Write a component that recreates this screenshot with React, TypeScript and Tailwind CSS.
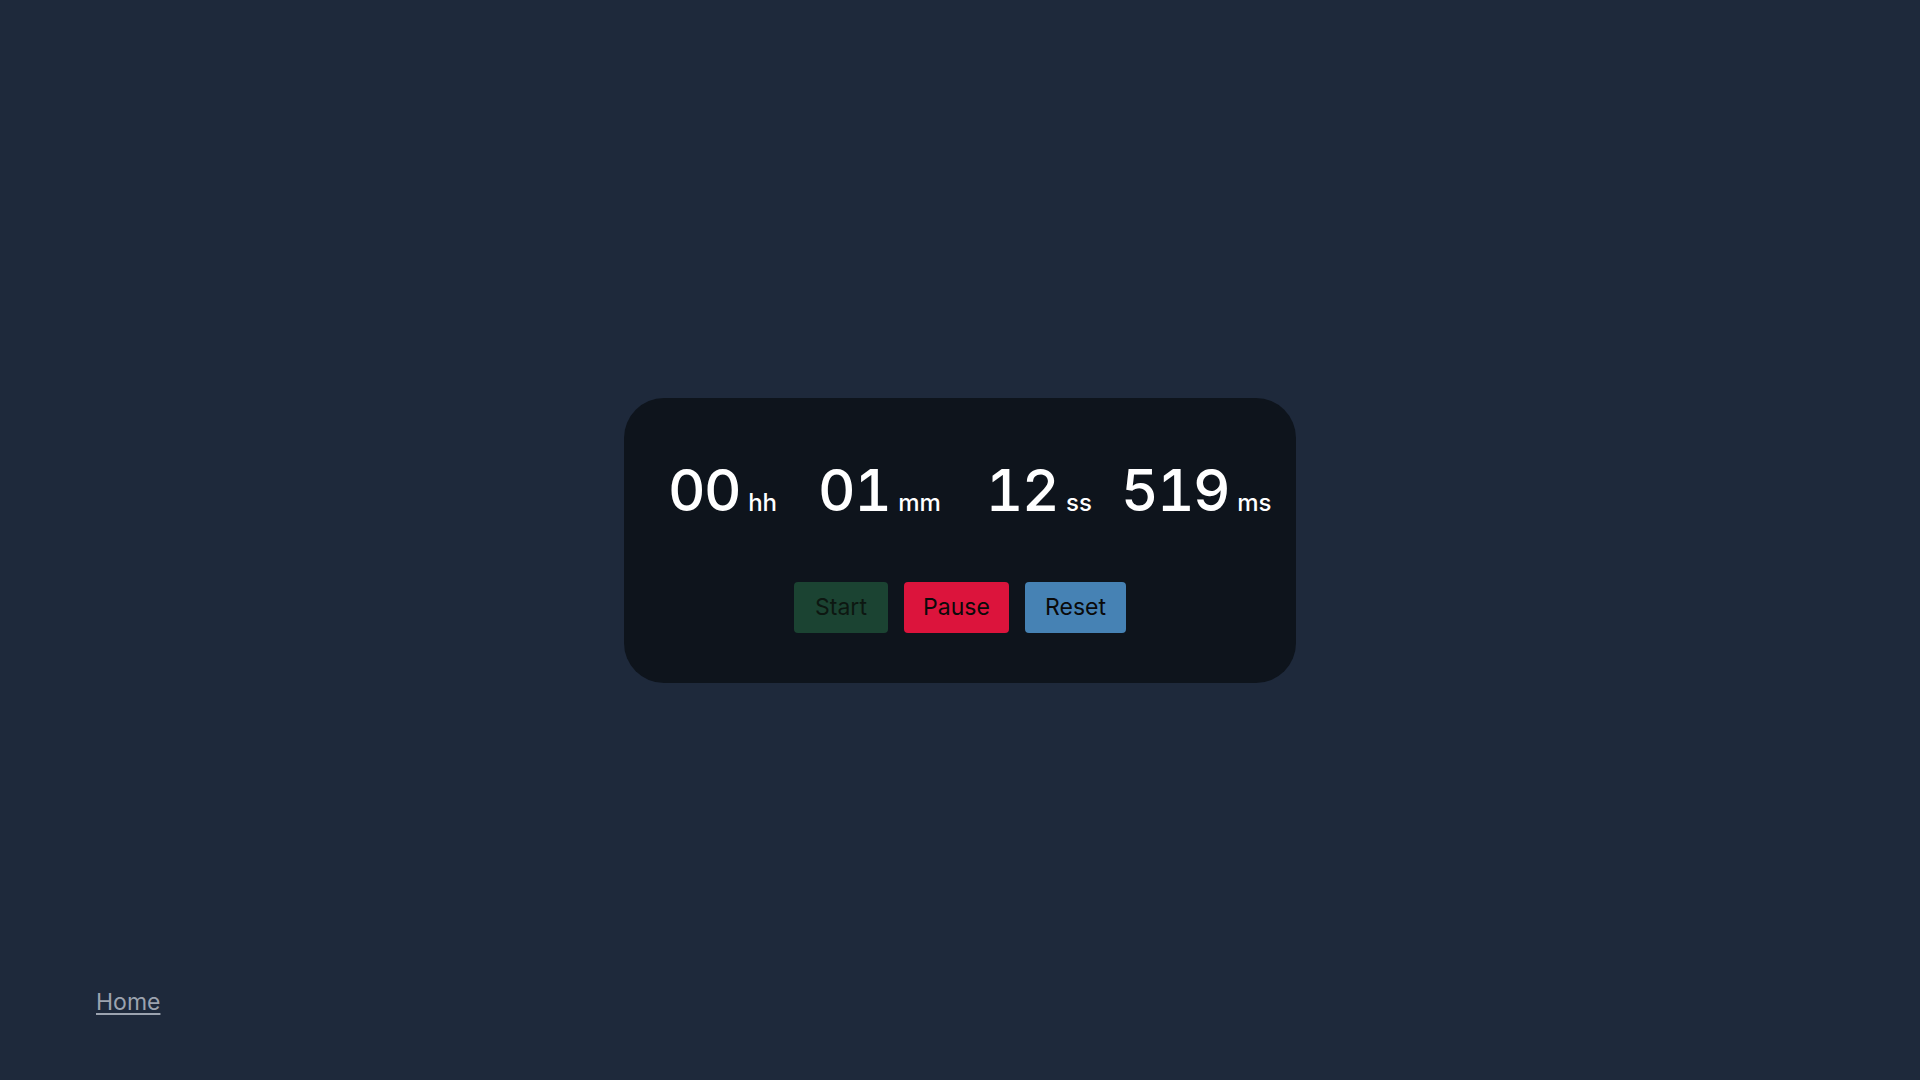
import React from "react";

function Unit({ value, label, className }: { value: string; label: string; className?: string }) {
  return (
    <div className={"flex items-baseline " + (className ?? "")}>
      <span className="text-[58px] leading-none font-medium text-white tracking-[-1.5px] tabular-nums">{value}</span>
      <span className="ml-[8px] text-[24px] leading-none font-medium text-white">{label}</span>
    </div>
  );
}

export default function App() {
  return (
    <div className="min-h-screen w-full bg-[#1e293b] grid grid-rows-[1fr_auto_1fr] font-['Inter',sans-serif]">
      <div />
      <div className="flex justify-center">
        <div className="w-[672px] h-[285px] rounded-[40px] bg-[#0e141c] flex flex-col">
          <div className="flex items-baseline pl-[44px] pt-[63px]">
            <Unit value="00" label="hh" />
            <Unit value="01" label="mm" className="ml-[41px]" />
            <Unit value="12" label="ss" className="ml-[45px]" />
            <Unit value="519" label="ms" className="ml-[29px]" />
          </div>
          <div className="flex justify-center gap-4 mt-[63px]">
            <button className="h-[51px] w-[94px] rounded-[4px] bg-[#1b4332] text-[23px] text-[#0d1711]">Start</button>
            <button className="h-[51px] w-[105px] rounded-[4px] bg-[#dc143c] text-[23px] text-[#0a0a0a]">Pause</button>
            <button className="h-[51px] w-[101px] rounded-[4px] bg-[#4682b4] text-[23px] text-[#0a0a0a]">Reset</button>
          </div>
        </div>
      </div>
      <div className="flex items-end pl-[96px] pb-[63px]">
        <a href="#" className="text-[23px] leading-[1.2] text-[#9ca3af] underline underline-offset-[3px]">Home</a>
      </div>
    </div>
  );
}
